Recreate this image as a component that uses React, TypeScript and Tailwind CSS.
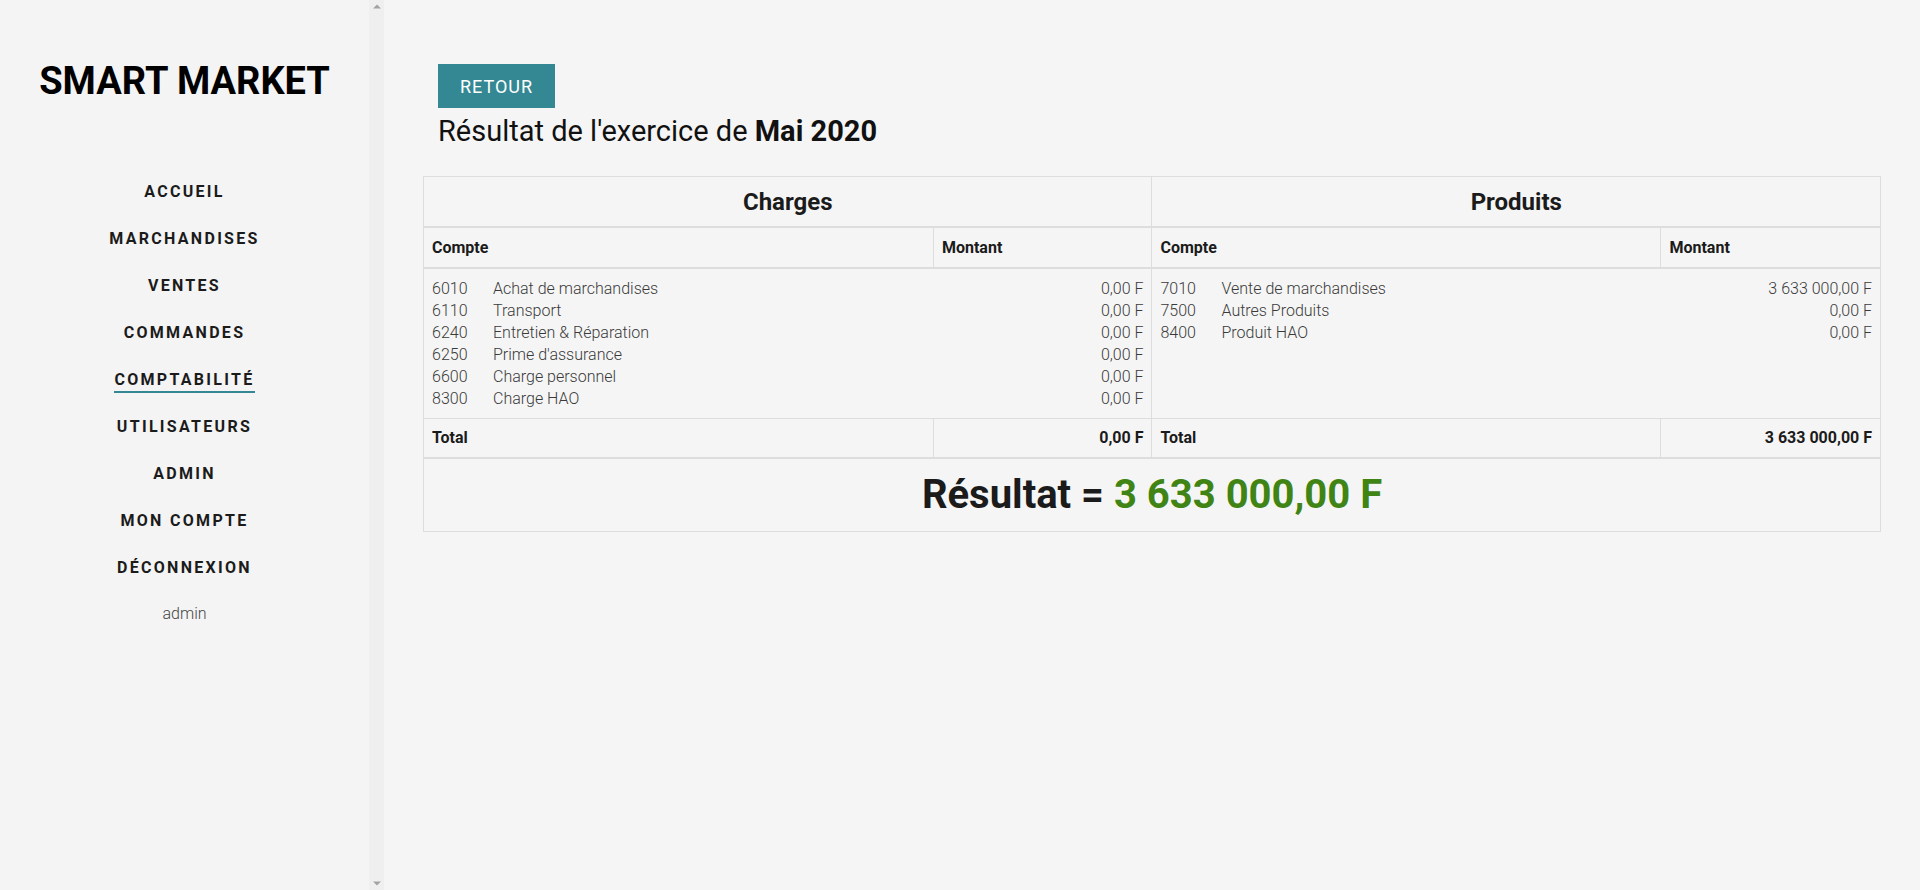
const navItems = [
  "ACCUEIL",
  "MARCHANDISES",
  "VENTES",
  "COMMANDES",
  "COMPTABILITÉ",
  "UTILISATEURS",
  "ADMIN",
  "MON COMPTE",
  "DÉCONNEXION",
];

const charges = [
  { code: "6010", label: "Achat de marchandises", amount: "0,00 F" },
  { code: "6110", label: "Transport", amount: "0,00 F" },
  { code: "6240", label: "Entretien & Réparation", amount: "0,00 F" },
  { code: "6250", label: "Prime d'assurance", amount: "0,00 F" },
  { code: "6600", label: "Charge personnel", amount: "0,00 F" },
  { code: "8300", label: "Charge HAO", amount: "0,00 F" },
];

const produits = [
  { code: "7010", label: "Vente de marchandises", amount: "3 633 000,00 F" },
  { code: "7500", label: "Autres Produits", amount: "0,00 F" },
  { code: "8400", label: "Produit HAO", amount: "0,00 F" },
];

type Line = { code: string; label: string; amount: string };

const Sidebar = () => {
  return (
    <aside className="flex h-[890px] w-[384px] shrink-0 bg-[#f4f4f4]">
      <div className="flex w-[369px] flex-col items-center">
        <h1 className="pt-[57px] text-[38px] font-bold leading-[48px] text-black">SMART MARKET</h1>
        <nav className="mt-[64px] flex flex-col items-center">
          {navItems.map((item) => (
            <a key={item} href="#" className="flex justify-center py-[11.5px]">
              <span
                className={
                  "block border-b-2 text-[16px] font-bold leading-[22px] tracking-[2.3px] text-[#1b1b1b] " +
                  (item === "COMPTABILITÉ" ? "border-[#338893]" : "border-transparent")
                }
              >
                {item}
              </span>
            </a>
          ))}
        </nav>
        <div className="mt-[10px] text-[16px] font-light leading-[24px] text-[#444]">admin</div>
      </div>
      {/* faux scrollbar */}
      <div className="flex w-[15px] flex-col items-center justify-between bg-[#efefef] py-[4px]">
        <svg width="8" height="5" viewBox="0 0 8 5">
          <path d="M0 4.5 L4 0.5 L8 4.5 Z" fill="#a3a3a3" />
        </svg>
        <svg width="8" height="5" viewBox="0 0 8 5">
          <path d="M0 0.5 L4 4.5 L8 0.5 Z" fill="#a3a3a3" />
        </svg>
      </div>
    </aside>
  );
};

const BodyCell = ({ lines, last }: { lines: Line[]; last?: boolean }) => (
  <div
    className={
      "col-span-2 border-b border-[#dddddd] pb-[8px] pl-[8px] pr-[8px] pt-[9px] text-[16px] font-light leading-[22px] text-[#3a3a3a] " +
      (last ? "" : "border-r")
    }
  >
    {lines.map((l) => (
      <div key={l.code} className="flex">
        <span className="w-[61px] shrink-0">{l.code}</span>
        <span className="flex-1">{l.label}</span>
        <span className="text-right">{l.amount}</span>
      </div>
    ))}
  </div>
);

const ResultTable = () => {
  const th = "border-b-2 border-[#dddddd] h-[41px] flex items-center px-[8px] text-[16px] font-bold text-[#1b1b1b]";
  const total = "border-b-2 border-[#dddddd] h-[40px] flex items-center px-[8px] text-[16px] font-bold text-[#1b1b1b]";
  return (
    <div className="mt-[28px] grid grid-cols-[511fr_219fr_510fr_219fr] border border-[#dddddd]">
      <div className="col-span-2 flex h-[51px] items-center justify-center border-b-2 border-r border-[#dddddd] text-[24px] font-bold text-[#1b1b1b]">
        Charges
      </div>
      <div className="col-span-2 flex h-[51px] items-center justify-center border-b-2 border-[#dddddd] text-[24px] font-bold text-[#1b1b1b]">
        Produits
      </div>

      <div className={th + " border-r"}>Compte</div>
      <div className={th + " border-r"}>Montant</div>
      <div className={th + " border-r"}>Compte</div>
      <div className={th}>Montant</div>

      <BodyCell lines={charges} />
      <BodyCell lines={produits} last />

      <div className={total + " border-r"}>Total</div>
      <div className={total + " border-r justify-end"}>0,00 F</div>
      <div className={total + " border-r"}>Total</div>
      <div className={total + " justify-end"}>3 633 000,00 F</div>

      <div className="col-span-4 flex h-[72px] items-center justify-center text-[40px] font-bold text-[#1b1b1b]">
        Résultat =&nbsp;<span className="text-[#3f8414]">3 633 000,00 F</span>
      </div>
    </div>
  );
};

export default function App() {
  return (
    <div className="flex h-[890px] w-full overflow-hidden bg-[#f5f5f5] font-['Roboto',sans-serif]">
      <Sidebar />
      <main className="flex-1 px-[39px]">
        <div className="pl-[15px] pt-[64px]">
          <button className="h-[44px] w-[117px] bg-[#338893] text-[18px] tracking-[1px] text-white">RETOUR</button>
          <h2 className="mt-[6px] text-[29px] leading-[34px] text-[#111]">
            Résultat de l'exercice de <span className="font-bold">Mai 2020</span>
          </h2>
        </div>
        <ResultTable />
      </main>
    </div>
  );
}
